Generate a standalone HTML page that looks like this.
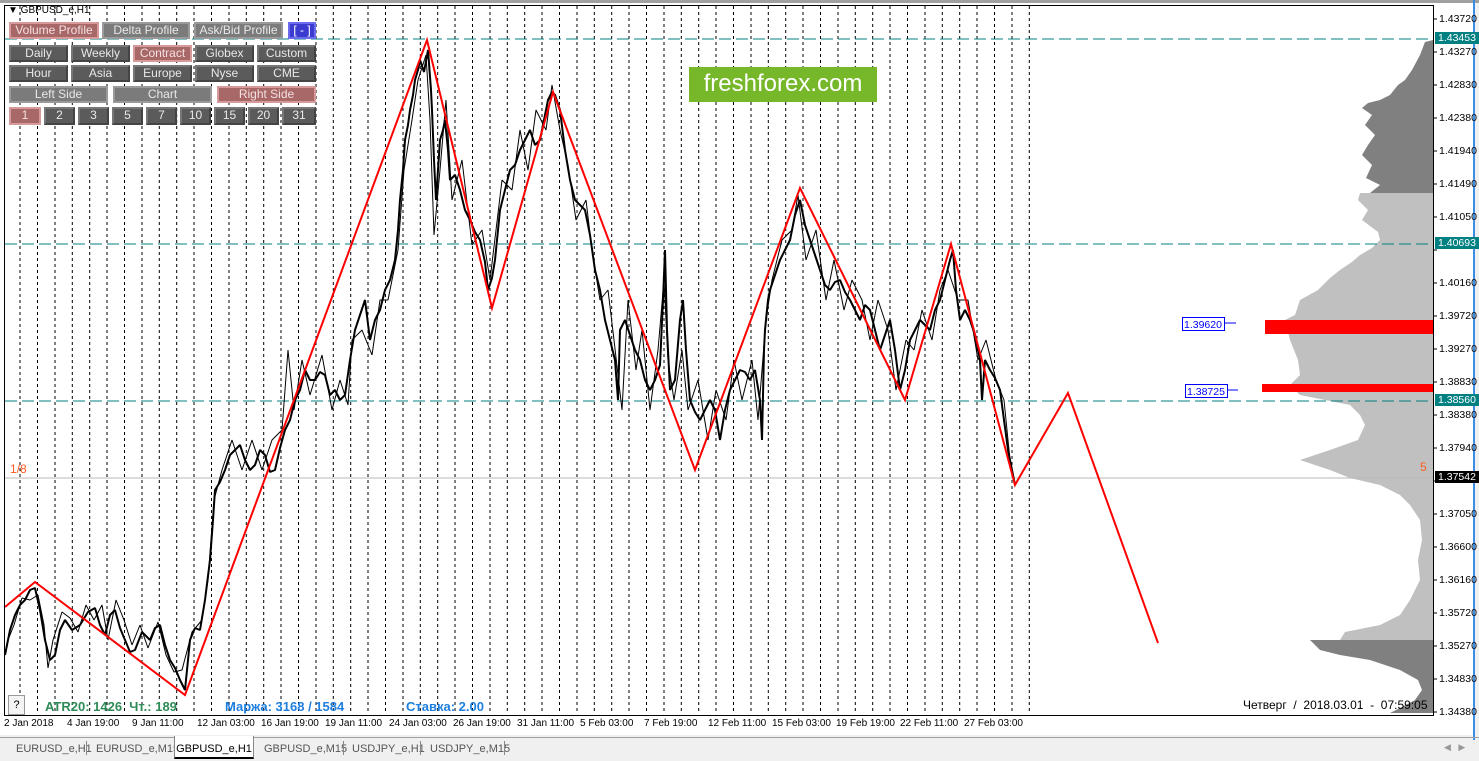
<!DOCTYPE html><html><head><meta charset="utf-8"><style>
*{margin:0;padding:0;box-sizing:border-box}
body{width:1479px;height:761px;overflow:hidden;background:#f0f0f0;font-family:"Liberation Sans",sans-serif;position:relative}
.a{position:absolute}
.b{position:absolute;color:#e8e8e8;font-size:12px;text-align:center;background:#5b5b5b;border:2px solid #444;border-top-color:#777;border-left-color:#777;line-height:13px}
.r{background:#a86868;border-color:#d79a9a;color:#f3e0e0}
.g{background:#7b7b7b;border-color:#9a9a9a}
.pl{position:absolute;left:1439px;font-size:10.5px;color:#000}
.tl{position:absolute;top:718px;font-size:10px;color:#000}
.tab{position:absolute;top:741px;font-size:11px;color:#555;height:18px;line-height:16px;white-space:nowrap}
.sep{position:absolute;top:741px;width:1px;height:14px;background:#888}
</style></head><body>
<div class="a" style="left:0;top:0;width:1479px;height:3px;background:#a0a0a0"></div>
<div class="a" style="left:1473px;top:0;width:2px;height:740px;background:#3a8ee6"></div>
<div class="a" style="left:0;top:3px;width:1473px;height:732px;background:#fff"></div>
<svg class="a" style="left:0;top:0" width="1479" height="740">
<g stroke="#000" stroke-width="1" stroke-dasharray="3,3">
<line x1="20" y1="6" x2="20" y2="714"/><line x1="37.5" y1="6" x2="37.5" y2="714"/><line x1="55" y1="6" x2="55" y2="714"/><line x1="72.3" y1="6" x2="72.3" y2="714"/><line x1="89.7" y1="6" x2="89.7" y2="714"/><line x1="107" y1="6" x2="107" y2="714"/><line x1="124.5" y1="6" x2="124.5" y2="714"/><line x1="142" y1="6" x2="142" y2="714"/><line x1="159.3" y1="6" x2="159.3" y2="714"/><line x1="176.7" y1="6" x2="176.7" y2="714"/><line x1="194" y1="6" x2="194" y2="714"/><line x1="211.5" y1="6" x2="211.5" y2="714"/><line x1="229" y1="6" x2="229" y2="714"/><line x1="246.3" y1="6" x2="246.3" y2="714"/><line x1="263.7" y1="6" x2="263.7" y2="714"/><line x1="281" y1="6" x2="281" y2="714"/><line x1="298.5" y1="6" x2="298.5" y2="714"/><line x1="316" y1="6" x2="316" y2="714"/><line x1="333.3" y1="6" x2="333.3" y2="714"/><line x1="350.7" y1="6" x2="350.7" y2="714"/><line x1="368" y1="6" x2="368" y2="714"/><line x1="385.5" y1="6" x2="385.5" y2="714"/><line x1="403" y1="6" x2="403" y2="714"/><line x1="420.3" y1="6" x2="420.3" y2="714"/><line x1="437.7" y1="6" x2="437.7" y2="714"/><line x1="455" y1="6" x2="455" y2="714"/><line x1="472.5" y1="6" x2="472.5" y2="714"/><line x1="490" y1="6" x2="490" y2="714"/><line x1="507.3" y1="6" x2="507.3" y2="714"/><line x1="524.7" y1="6" x2="524.7" y2="714"/><line x1="542" y1="6" x2="542" y2="714"/><line x1="559.5" y1="6" x2="559.5" y2="714"/><line x1="577" y1="6" x2="577" y2="714"/><line x1="594.3" y1="6" x2="594.3" y2="714"/><line x1="611.7" y1="6" x2="611.7" y2="714"/><line x1="629" y1="6" x2="629" y2="714"/><line x1="646.5" y1="6" x2="646.5" y2="714"/><line x1="664" y1="6" x2="664" y2="714"/><line x1="681.3" y1="6" x2="681.3" y2="714"/><line x1="698.7" y1="6" x2="698.7" y2="714"/><line x1="716" y1="6" x2="716" y2="714"/><line x1="733.5" y1="6" x2="733.5" y2="714"/><line x1="751" y1="6" x2="751" y2="714"/><line x1="768.3" y1="6" x2="768.3" y2="714"/><line x1="785.7" y1="6" x2="785.7" y2="714"/><line x1="803" y1="6" x2="803" y2="714"/><line x1="820.5" y1="6" x2="820.5" y2="714"/><line x1="838" y1="6" x2="838" y2="714"/><line x1="855.3" y1="6" x2="855.3" y2="714"/><line x1="872.7" y1="6" x2="872.7" y2="714"/><line x1="890" y1="6" x2="890" y2="714"/><line x1="907.5" y1="6" x2="907.5" y2="714"/><line x1="925" y1="6" x2="925" y2="714"/><line x1="942.3" y1="6" x2="942.3" y2="714"/><line x1="959.7" y1="6" x2="959.7" y2="714"/><line x1="977" y1="6" x2="977" y2="714"/><line x1="994.5" y1="6" x2="994.5" y2="714"/><line x1="1012" y1="6" x2="1012" y2="714"/><line x1="1029.3" y1="6" x2="1029.3" y2="714"/>
</g>
<polygon fill="#808080" points="1433,40 1425,42 1420,55 1412,70 1405,80 1398,85 1390,95 1380,100 1368,103 1362,108 1372,115 1365,125 1375,135 1368,145 1362,155 1372,165 1366,178 1380,185 1370,193 1433,193"/>
<polygon fill="#c0c0c0" points="1433,193 1360,193 1358,200 1368,210 1362,220 1378,232 1380,240 1372,248 1360,255 1352,262 1340,270 1330,278 1318,290 1300,300 1295,315 1285,320 1290,340 1298,360 1300,375 1290,385 1300,395 1350,405 1360,415 1365,425 1358,440 1330,450 1300,460 1330,470 1350,478 1380,485 1400,495 1410,505 1420,520 1422,540 1418,560 1420,580 1410,600 1400,615 1380,625 1345,632 1340,640 1433,640"/>
<polygon fill="#808080" points="1433,640 1310,640 1320,650 1340,655 1370,660 1400,670 1418,680 1422,690 1415,700 1400,708 1390,713 1433,713"/>
<rect x="1265" y="320" width="168" height="14" fill="#f00"/>
<rect x="1262" y="384" width="171" height="8" fill="#f00"/>
<g stroke="#008080" stroke-width="1" stroke-dasharray="12,5">
<line x1="5" y1="39" x2="1433" y2="39"/><line x1="5" y1="244" x2="1433" y2="244"/><line x1="5" y1="401" x2="1433" y2="401"/></g>
<line x1="5" y1="478" x2="1433" y2="478" stroke="#b8b8b8"/>
<g fill="none" stroke="#000" stroke-linejoin="bevel">
<polyline stroke-width="2" points="5,655 10,630 15,615 20,605 25,600 30,590 35,588 40,610 45,640 50,660 55,655 60,630 65,620 72,630 80,625 88,612 95,608 100,625 105,635 110,615 115,610 120,628 125,640 130,652 135,650 142,632 150,640 155,628 160,625 165,645 170,660 175,668 180,680 185,690 188,660 190,640 195,628 200,630 205,600 210,560 213,520 215,490 220,482 225,470 230,455 235,450 240,445 245,460 250,470 255,465 260,450 265,455 270,472 275,470 280,448 285,430 290,420 295,400 300,390 305,370 310,380 315,380 320,372 325,375 330,395 335,390 340,400 345,395 350,360 355,330 360,315 365,300 370,340 375,320 380,310 385,290 390,280 395,260 398,230 400,200 403,170 405,140 408,125 410,110 413,95 415,80 418,70 420,60 424,72 428,50 431,90 432,110 434,160 436,200 438,170 440,140 443,130 445,120 448,150 450,180 455,175 460,190 465,210 470,220 475,232 480,240 485,262 488,290 492,278 495,260 498,230 500,210 505,190 510,170 515,165 520,150 525,140 530,130 535,145 540,140 544,120 548,100 552,92 555,95 560,110 565,150 570,180 575,200 580,205 585,210 590,235 595,270 600,290 605,320 610,340 615,360 618,400 620,330 625,320 630,335 635,350 640,360 645,380 650,390 655,380 660,365 663,300 665,250 667,330 670,390 675,380 680,320 683,300 686,350 690,400 695,412 700,420 705,410 710,400 715,410 720,440 725,410 730,390 735,380 740,370 745,372 750,380 755,370 760,400 762,440 764,350 765,330 768,300 770,290 775,275 780,260 785,250 790,240 795,215 800,200 805,225 810,240 815,255 820,270 825,285 830,290 835,282 840,280 845,292 850,300 855,310 860,320 865,305 870,310 875,330 880,350 885,335 890,320 895,350 900,390 905,370 910,340 915,330 920,320 925,325 930,330 935,310 940,300 945,280 950,260 953,250 956,290 960,320 965,310 970,320 975,335 980,360 982,400 985,360 990,370 995,378 1000,390 1004,420 1008,450 1012,470 1015,485"/>
<polyline stroke-width="1" points="8,640 14,625 22,598 30,600 38,595 44,625 48,668 53,640 62,612 70,618 78,632 86,605 94,620 102,605 108,640 116,600 124,620 132,645 140,625 148,648 158,622 166,655 174,672 182,670 192,632 202,620 208,580 214,500 222,470 232,440 242,470 252,440 262,470 272,440 282,430 288,350 294,410 302,360 310,395 322,355 332,410 340,380 348,405 352,340 362,330 372,355 380,300 388,300 394,270 398,250 404,170 412,120 418,80 426,55 430,120 434,235 440,170 446,100 452,200 462,160 472,245 482,230 490,280 496,230 502,180 512,190 520,130 528,170 536,110 546,130 552,85 560,130 568,165 576,220 586,200 592,250 600,300 608,290 614,340 622,410 628,300 636,370 642,330 650,410 658,350 664,280 668,360 674,400 682,350 688,410 698,380 708,440 716,390 726,420 734,360 742,400 752,360 758,420 766,320 772,280 782,240 792,230 798,195 806,260 816,230 826,300 834,260 844,310 852,280 862,300 870,340 878,300 888,330 896,390 906,340 914,350 922,310 932,340 940,290 948,270 958,300 968,300 978,360 986,340 996,380 1004,400 1010,460"/>
</g>
<polyline fill="none" stroke="#f00" stroke-width="2" points="5,607 35,582 185,695 427,40 492,308 553,92 695,470 800,188 905,400 951,244 1015,485 1068,393 1158,643"/>
<rect x="1182.5" y="317.5" width="42" height="13" fill="#fff" stroke="#00f"/><line x1="1224" y1="323" x2="1236" y2="323" stroke="#00f"/>
<rect x="1185.5" y="384.5" width="42" height="13" fill="#fff" stroke="#00f"/><line x1="1227" y1="390" x2="1238" y2="390" stroke="#00f"/>
<text x="1184" y="328" font-size="10.5" fill="#00f" font-family="Liberation Sans">1.39620</text>
<text x="1187" y="395" font-size="10.5" fill="#00f" font-family="Liberation Sans">1.38725</text>
<rect x="4.5" y="5.5" width="1429" height="710" fill="none" stroke="#000"/>
<g stroke="#000"><line x1="1433" y1="19" x2="1437" y2="19"/><line x1="1433" y1="52" x2="1437" y2="52"/><line x1="1433" y1="85" x2="1437" y2="85"/><line x1="1433" y1="118" x2="1437" y2="118"/><line x1="1433" y1="151" x2="1437" y2="151"/><line x1="1433" y1="184" x2="1437" y2="184"/><line x1="1433" y1="217" x2="1437" y2="217"/><line x1="1433" y1="250" x2="1437" y2="250"/><line x1="1433" y1="283" x2="1437" y2="283"/><line x1="1433" y1="316" x2="1437" y2="316"/><line x1="1433" y1="349" x2="1437" y2="349"/><line x1="1433" y1="382" x2="1437" y2="382"/><line x1="1433" y1="415" x2="1437" y2="415"/><line x1="1433" y1="448" x2="1437" y2="448"/><line x1="1433" y1="481" x2="1437" y2="481"/><line x1="1433" y1="514" x2="1437" y2="514"/><line x1="1433" y1="547" x2="1437" y2="547"/><line x1="1433" y1="580" x2="1437" y2="580"/><line x1="1433" y1="613" x2="1437" y2="613"/><line x1="1433" y1="646" x2="1437" y2="646"/><line x1="1433" y1="679" x2="1437" y2="679"/><line x1="1433" y1="712" x2="1437" y2="712"/></g>
</svg>
<div class="pl" style="top:13px">1.43720</div><div class="pl" style="top:46px">1.43270</div><div class="pl" style="top:79px">1.42830</div><div class="pl" style="top:112px">1.42380</div><div class="pl" style="top:145px">1.41940</div><div class="pl" style="top:178px">1.41490</div><div class="pl" style="top:211px">1.41050</div><div class="pl" style="top:277px">1.40160</div><div class="pl" style="top:310px">1.39720</div><div class="pl" style="top:343px">1.39270</div><div class="pl" style="top:376px">1.38830</div><div class="pl" style="top:409px">1.38380</div><div class="pl" style="top:442px">1.37940</div><div class="pl" style="top:508px">1.37050</div><div class="pl" style="top:541px">1.36600</div><div class="pl" style="top:574px">1.36160</div><div class="pl" style="top:607px">1.35720</div><div class="pl" style="top:640px">1.35270</div><div class="pl" style="top:673px">1.34830</div><div class="pl" style="top:706px">1.34380</div>
<div class="pl" style="top:32px;left:1435px;background:#008080;color:#fff;padding:0 3px">1.43453</div>
<div class="pl" style="top:237px;left:1435px;background:#008080;color:#fff;padding:0 3px">1.40693</div>
<div class="pl" style="top:394px;left:1435px;background:#008080;color:#fff;padding:0 3px">1.38560</div>
<div class="pl" style="top:471px;left:1435px;background:#000;color:#fff;padding:0 3px">1.37542</div>
<div class="a" style="left:8px;top:5px;font-size:10px">&#9660; GBPUSD_e,H1</div>
<div class="b r" style="left:9px;top:22px;width:90px;height:17px">Volume Profile</div>
<div class="b g" style="left:102px;top:22px;width:88px;height:17px">Delta Profile</div>
<div class="b g" style="left:194px;top:22px;width:89px;height:17px">Ask/Bid Profile</div>
<div class="b" style="left:288px;top:22px;width:28px;height:17px;background:#3b3bd0;border-color:#6b6bf0;color:#fff">[ - ]</div>
<div class="b" style="left:9px;top:45px;width:59px;height:17px">Daily</div><div class="b" style="left:71px;top:45px;width:59px;height:17px">Weekly</div><div class="b r" style="left:133px;top:45px;width:59px;height:17px">Contract</div><div class="b" style="left:195px;top:45px;width:59px;height:17px">Globex</div><div class="b" style="left:257px;top:45px;width:59px;height:17px">Custom</div>
<div class="b" style="left:9px;top:65px;width:59px;height:17px">Hour</div><div class="b" style="left:71px;top:65px;width:59px;height:17px">Asia</div><div class="b" style="left:133px;top:65px;width:59px;height:17px">Europe</div><div class="b" style="left:195px;top:65px;width:59px;height:17px">Nyse</div><div class="b" style="left:257px;top:65px;width:59px;height:17px">CME</div>
<div class="b g" style="left:9px;top:86px;width:99px;height:17px">Left Side</div><div class="b g" style="left:113px;top:86px;width:99px;height:17px">Chart</div><div class="b r" style="left:217px;top:86px;width:99px;height:17px">Right Side</div>
<div class="b r" style="left:9px;top:107px;width:32px;height:18px">1</div><div class="b" style="left:44px;top:107px;width:31px;height:18px">2</div><div class="b" style="left:78px;top:107px;width:31px;height:18px">3</div><div class="b" style="left:112px;top:107px;width:31px;height:18px">5</div><div class="b" style="left:146px;top:107px;width:31px;height:18px">7</div><div class="b" style="left:180px;top:107px;width:31px;height:18px">10</div><div class="b" style="left:214px;top:107px;width:31px;height:18px">15</div><div class="b" style="left:248px;top:107px;width:31px;height:18px">20</div><div class="b" style="left:282px;top:107px;width:34px;height:18px">31</div>
<div class="a" style="left:689px;top:67px;width:188px;height:35px;background:#76b82a;color:#fff;font-size:24px;text-align:center;line-height:34px">freshforex.com</div>
<div class="a" style="left:10px;top:462px;font-size:12px;color:#ff5a1e">1/8</div>
<div class="a" style="left:1420px;top:460px;font-size:12px;color:#ff5a1e">5</div>
<div class="a" style="left:8px;top:695px;width:17px;height:20px;border:1px solid #999;background:#f4f4f4;font-size:11px;text-align:center;line-height:18px">?</div>
<div class="a" style="left:45px;top:699px;font-size:13px;font-weight:bold;color:#2e8b57">ATR20: 1426&nbsp; Чт.: 189</div>
<div class="a" style="left:225px;top:699px;font-size:13px;font-weight:bold;color:#1e7fe0">Маржа: 3168 / 1584</div>
<div class="a" style="left:406px;top:699px;font-size:13px;font-weight:bold;color:#1e7fe0">Ставка: 2.00</div>
<div class="a" style="left:1243px;top:698px;font-size:12px;color:#000">Четверг&nbsp; /&nbsp; 2018.03.01&nbsp; -&nbsp; 07:59:05</div>
<div class="tl" style="left:4px">2 Jan 2018</div><div class="tl" style="left:67px">4 Jan 19:00</div><div class="tl" style="left:132px">9 Jan 11:00</div><div class="tl" style="left:197px">12 Jan 03:00</div><div class="tl" style="left:261px">16 Jan 19:00</div><div class="tl" style="left:325px">19 Jan 11:00</div><div class="tl" style="left:389px">24 Jan 03:00</div><div class="tl" style="left:453px">26 Jan 19:00</div><div class="tl" style="left:517px">31 Jan 11:00</div><div class="tl" style="left:580px">5 Feb 03:00</div><div class="tl" style="left:644px">7 Feb 19:00</div><div class="tl" style="left:708px">12 Feb 11:00</div><div class="tl" style="left:772px">15 Feb 03:00</div><div class="tl" style="left:836px">19 Feb 19:00</div><div class="tl" style="left:900px">22 Feb 11:00</div><div class="tl" style="left:964px">27 Feb 03:00</div>
<div class="a" style="left:0;top:737px;width:1479px;height:1px;background:#a0a0a0"></div>
<div class="tab" style="left:16px">EURUSD_e,H1</div><div class="sep" style="left:86px"></div>
<div class="tab" style="left:96px">EURUSD_e,M15</div>
<div class="a" style="left:174px;top:736px;width:80px;height:23px;background:#fff;border:1px solid #888;border-top:none;border-bottom:2px solid #000"></div>
<div class="tab" style="left:174px;width:80px;text-align:center;color:#000">GBPUSD_e,H1</div>
<div class="tab" style="left:264px">GBPUSD_e,M15</div><div class="sep" style="left:343px"></div>
<div class="tab" style="left:352px">USDJPY_e,H1</div><div class="sep" style="left:420px"></div>
<div class="tab" style="left:430px">USDJPY_e,M15</div><div class="sep" style="left:504px"></div>
<div class="a" style="left:1444px;top:742px;font-size:9px;color:#999">&#9664;&nbsp;&nbsp;&nbsp;&#9654;</div>
</body></html>
